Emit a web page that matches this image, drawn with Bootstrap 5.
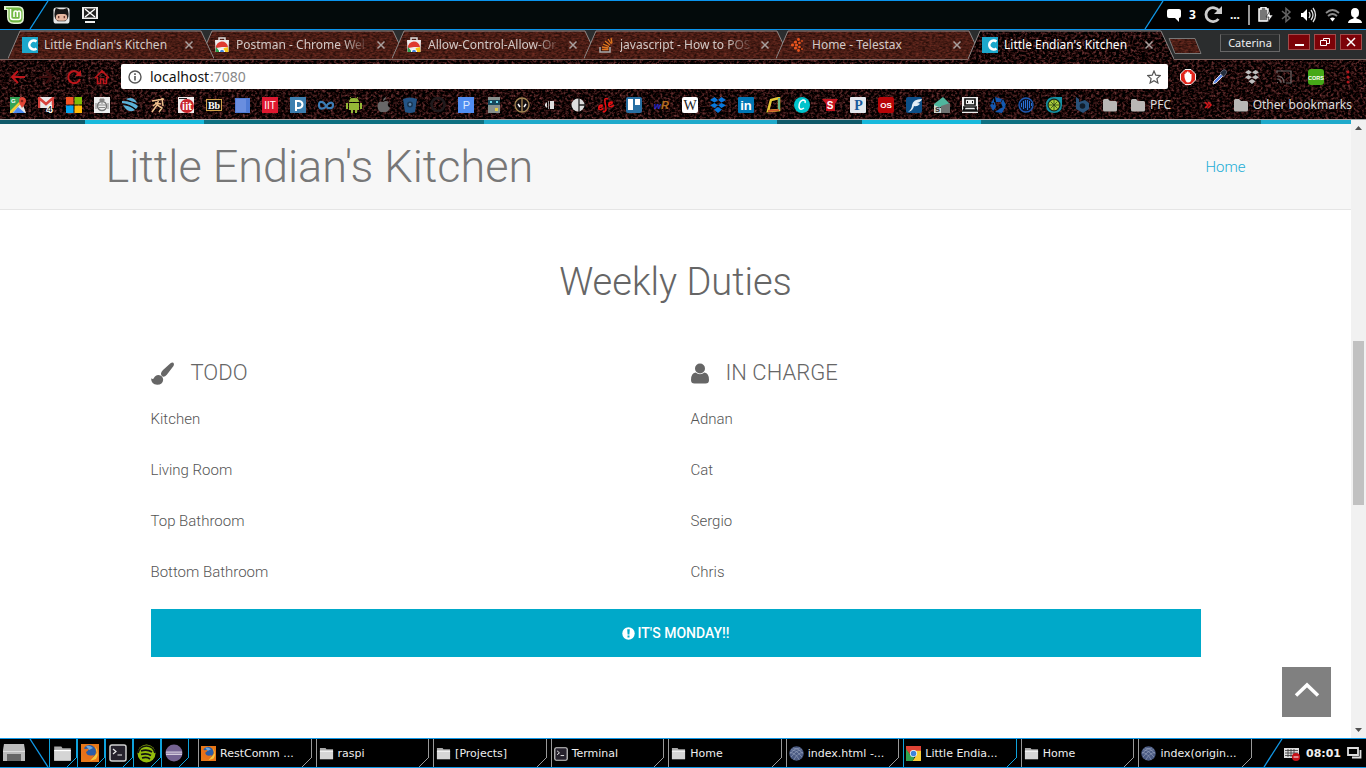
<!DOCTYPE html>
<html lang="en">
<head>
<meta charset="utf-8">
<meta name="viewport" content="width=device-width, initial-scale=1">
<title>Little Endian's Kitchen</title>
<link href="https://cdn.jsdelivr.net/npm/bootstrap@5.3.0/dist/css/bootstrap.min.css" rel="stylesheet">
<style>
:root { --line: #1199e8; --cyan: #00a9c9; --ui: "Noto Sans", "Open Sans", sans-serif; }
body { font-family: Roboto, sans-serif; background: #000; color: #666; }
button { border: 0; background: none; padding: 0; color: inherit; }
a { color: inherit; text-decoration: none; }
svg { display: block; flex: none; }

/* top panel */
.top-panel { height: 30px; background: #030a0b; border-top: 1px solid #0a94ee; border-bottom: 1px solid #0a94ee; font-family: var(--ui); color: #fff; }
.top-panel .tray { background: #000; gap: 8px; padding: 0 4px 0 2px; font-size: 12px; }

/* browser chrome */
.tab-strip { height: 30px; font-family: var(--ui); font-size: 12px; background: #2b2d2e; border-bottom: 1px solid #806a66; }
.browser-tab { width: 192px; height: 30px; color: #d3c9c6; }
.browser-tab .shape { position: absolute; left: 0; top: 0; }
.browser-tab .label { white-space: nowrap; }
.browser-tab .fades { -webkit-mask-image: linear-gradient(90deg, #000 80%, transparent); mask-image: linear-gradient(90deg, #000 80%, transparent); }
.browser-tab .inside { position: relative; height: 29px; padding: 0 6px 0 14px; gap: 6px; }
.user-name { height: 18px; width: 60px; border: 1px solid #666; border-top-color: #444; font-size: 11px; color: #eee; line-height: 16px; }
.win-btn { width: 22px; height: 16px; background: #7c0208; border: 1px solid #a14a4a; color: #fff; }
.textured { background-color: #0c0506; background-image: url("data:image/svg+xml,%3Csvg xmlns='http://www.w3.org/2000/svg' width='700' height='62'%3E%3Cfilter id='a' x='0' y='0' width='1' height='1' color-interpolation-filters='sRGB'%3E%3CfeTurbulence type='fractalNoise' baseFrequency='.35 .4' numOctaves='3' seed='8'/%3E%3CfeColorMatrix values='1 0 0 0 -.4 .55 0 0 0 -.25 .55 0 0 0 -.25 0 0 0 0 1'/%3E%3C/filter%3E%3Crect width='700' height='62' filter='url(%23a)'/%3E%3C/svg%3E"); }
.tool-row { height: 33px; padding: 0 10px; }
.nav-buttons { gap: 12px; width: 111px; }
.address { height: 25px; background: #fff; border-radius: 2px; color: #555; font-family: var(--ui); padding: 0 7px; }
.address input { border: 0; outline: 0; background: transparent; font-size: 14px; padding: 0; color: #111; min-width: 0; width: 60px; }
.address .port { color: #888; font-size: 14px; }
.bookmarks { height: 27px; padding: 0 14px 3px 10px; gap: 12px; font-family: var(--ui); font-size: 12px; color: #ddd; border-bottom: 1px solid #aaa; white-space: nowrap; overflow: hidden; }

/* web page */
.site { background: #fff; min-height: 0; }
.stripes { height: 4px; background: linear-gradient(90deg, #105a6a 0 85px, #18b9dc 85px 204px, #0f7182 204px 484px, #1faacb 484px 777px, #105a6a 777px 862px, #18b9dc 862px 981px, #0f7182 981px 1261px, #1faacb 1261px); }
.wide { max-width: 1170px; padding: 0 15px; }
.site-header { background: #f7f7f7; border-bottom: 1px solid #e5e5e5; height: 86px; }
.site-title { font-weight: 300; font-size: 45px; line-height: 50px; color: #777; }
.site-header .nav-link { font-weight: 300; font-size: 15px; color: #1badd6; padding: 2px 0 0; }
.duties { padding: 50px 45px 0; }
.duties h2 { font-weight: 300; font-size: 38px; line-height: 44px; color: #666; margin: 0 0 54px; }
.duties .row { --bs-gutter-x: 30px; }
.duties h3 { font-weight: 300; font-size: 22px; line-height: 30px; color: #666; gap: 17px; margin: 0 0 6px; }
.duty-list { font-weight: 300; font-size: 15px; line-height: 51px; margin: 0; color: #555; }
.notice { background: var(--cyan); color: #fff; font-weight: 500; font-size: 14px; height: 48px; gap: 3px; margin-top: 11px; }
.to-top { position: absolute; right: 20px; bottom: 21px; width: 49px; height: 50px; background: #808080; }
.scroll-track { width: 15px; background: #f1f1f1; }
.scroll-thumb { width: 11px; background: #c1c1c1; }

/* task bar */
.task-bar { height: 30px; border-top: 1px solid var(--line); border-bottom: 1px solid var(--line); background: #000; color: #eee; font: 11px/28px "DejaVu Sans", sans-serif; }
.launcher { width: 28px; height: 28px; border-left: 1px solid #0fa3dc; position: relative; padding-left: 3px; }
.tasks { gap: 4px; padding: 0 10px 0 9px; min-width: 0; }
.task { flex: 1 1 0; min-width: 0; white-space: nowrap; height: 28px; position: relative; padding: 1px 0 0 2px; gap: 4px; border-left: 1px solid #999; color: #eee; }
.corner::after { content: ""; position: absolute; right: 0; bottom: 0; width: 10px; height: 10px; background: linear-gradient(135deg, transparent 47%, currentColor 47% 54%, #000 54%); }
.corner::before { content: ""; position: absolute; right: 0; top: 0; bottom: 9px; border-right: 1px solid currentColor; }
.launcher.corner::before, .launcher.corner::after { color: #0fa3dc; }
.task.corner::before, .task.corner::after { color: #999; }
.task.current { border-color: #0fa3dc; }
.task.corner.current::before, .task.corner.current::after { color: #0fa3dc; }
.status { gap: 6px; padding-right: 4px; }
.clock { font-weight: 700; font-size: 11px; padding-top: 1px; }
</style>
</head>
<body class="vh-100 d-flex flex-column overflow-hidden">

<svg width="0" height="0" class="position-absolute" aria-hidden="true">
  <defs>
    <filter id="weave" x="0" y="0" width="1" height="1" color-interpolation-filters="sRGB">
      <feTurbulence type="fractalNoise" baseFrequency=".3 .6" numOctaves="2" seed="3"/>
      <feColorMatrix values=".45 0 0 0 .06  .2 0 0 0 .01  .16 0 0 0 0  0 0 0 0 1"/>
      <feComposite in2="SourceGraphic" operator="in"/>
    </filter>
    <filter id="scorch" x="0" y="0" width="1" height="1" color-interpolation-filters="sRGB">
      <feTurbulence type="fractalNoise" baseFrequency=".35 .4" numOctaves="3" seed="5"/>
      <feColorMatrix values="1 0 0 0 -.4  .55 0 0 0 -.25  .55 0 0 0 -.25  0 0 0 0 1"/>
      <feComposite in2="SourceGraphic" operator="in"/>
    </filter>
    <symbol id="tab-shape" viewBox="0 0 206 29"><path d="M0 29L12 1H193L206 29Z" fill="#4a2018" filter="url(#weave)"/><path d="M0 28.500L12 1H193L206 28.500" fill="none" stroke="#8b8685"/></symbol>
    <symbol id="tab-front" viewBox="0 0 206 30"><path d="M0 30L12 1H193L206 30Z" fill="#150809" filter="url(#scorch)"/><path d="M0 29L12 1H193L206 29" fill="none" stroke="#8b8685"/></symbol>
    <symbol id="close" viewBox="0 0 10 10"><path d="M1.500 1.500l7 7m0-7l-7 7" stroke="#aaa09e" stroke-width="1.500"/></symbol>
    <symbol id="fav-c" viewBox="0 0 16 16"><path fill="#1ca8cc" d="M0 0h16v16H0z"/><path d="M14.500 4.600A4.400 4.400 0 1 0 14.500 11.400" fill="none" stroke="#fff" stroke-width="2.600"/></symbol>
    <symbol id="store" viewBox="0 0 16 16"><path d="M5 3V1h6v2" fill="none" stroke="#ddd" stroke-width="1.500"/><path fill="#eee" d="M1 3h14l-.5 12h-13z"/><path fill="#df3b30" d="M2 11a6 6 0 0 1 12-1H8z"/><path fill="#2ba14b" d="M2 10l4 5H1.700z"/><path fill="#f7c71c" d="M14 10l.4 5H8l2-4z"/><path fill="#fff" d="M5 15a3 3 0 0 1 6 0z"/><path fill="#4285dd" d="M6 15a2 2.200 0 0 1 4 0z"/></symbol>
    <symbol id="folder" viewBox="0 0 16 16"><path fill="#b9b7b5" d="M1 3.500Q1 2 2.500 2H6l2 2h5.500Q15 4 15 5.500V13q0 1.500-1.500 1.500h-11Q1 14.500 1 13z"/></symbol>
    <symbol id="files" viewBox="0 0 16 16"><path fill="#aaa" d="M1 2h6l1 1.500h7V14H1z"/><path fill="#d5d5d5" d="M1 5h14v9H1z"/><path stroke="#fff" d="M1 5.500h14"/></symbol>
    <symbol id="firefox" viewBox="0 0 18 18"><path fill="#e77718" d="M0 0h18v18H0z"/><path fill="#f6c63b" d="M14 2q5 7 1 13l-6 2 7-8z"/><circle cx="8.500" cy="7.500" r="6.500" fill="#2a5da6"/><path fill="#6da9df" d="M5 2q4-1 7 2L8 6z"/><path fill="#e8711a" d="M1 3l3 2 4-.3Q7 7 5 8q1 5 8 3-2 5-7 4Q0 13 1 3z"/></symbol>
    <symbol id="shell" viewBox="0 0 18 18"><rect x="1" y="1" width="16" height="16" rx="2" fill="#25212c" stroke="#d0d0d0" stroke-width="1.500"/><path d="M4 5l3 2.500L4 10M8.500 11H13" fill="none" stroke="#eee" stroke-width="1.200"/></symbol>
    <symbol id="globe" viewBox="0 0 16 16"><circle cx="8" cy="8" r="7.700" fill="#4a5a82"/><path d="M2 4q6 0 12 8M1 7q6 0 10 8M4 2q6 0 11 6M14 4q-6 0-12 8M15 7q-6 0-10 8M12 2q-6 0-11 6" fill="none" stroke="#a3adc6" stroke-width=".6"/></symbol>
    <symbol id="chrome" viewBox="0 0 16 16"><path fill="#de4335" d="M0 0h16v6H8L4 9 0 4z"/><path fill="#31a350" d="M0 3l5 7 4 2-2 4H0z"/><path fill="#f8cc35" d="M10 5h6v11H7l4-6z"/><circle cx="8" cy="8" r="3.800" fill="#fff"/><circle cx="8" cy="8" r="3" fill="#3e83dc"/></symbol>
  </defs>
</svg>

<header class="top-panel d-flex flex-shrink-0 align-items-stretch">
  <div class="d-flex flex-grow-1 align-items-center">
    <svg width="49" height="28" viewBox="0 0 49 28"><path d="M0 0h48L30 28H0z"/><path d="M48 0L30 28" stroke="#1199e8" stroke-width="1.300"/><path d="M4 5h14q6 0 6 6v6q0 6-6 6h-4q-7 0-7-7V9H4z" fill="#dff0cf"/><path d="M6 6.500h12q4.500 0 4.500 5V17q0 4.500-5 4.500H14q-5.500 0-5.500-5.500V8H6z" fill="#72b843"/><path d="M10.500 8v8q0 2.500 2.500 2.500h5.500q2 0 2-2V12q0-2-1.500-2t-1.700 2v4m0-4q0-2-1.700-2T14 12v4" fill="none" stroke="#fff" stroke-width="1.600"/></svg>
    <button type="button" aria-label="GitHub" class="ms-1"><svg width="17" height="17" viewBox="0 0 18 18"><rect x=".5" y=".5" width="17" height="17" rx="3" fill="#e7e7e7"/><path fill="#171515" d="M2 4l1-3 4 1.500h4L15 1l1 3q2 8-3 11H5Q0 12 2 4z"/><rect x="3" y="7.500" width="12" height="7" rx="3.500" fill="#e8b7a0"/><path d="M6 9.500v2.500m6-2.500v2.500" stroke="#6b3b30" stroke-width="1.500"/></svg></button>
    <button type="button" aria-label="Display" class="ms-2 ps-1"><svg width="16" height="16" viewBox="0 0 16 16"><path fill="#eee" d="M0 0h16v12H0zM3 14h10v2H3z"/><path fill="#222" d="M2 1.500h12v9H2z"/><path d="M3 2l10 8M13 2L3 10" stroke="#fff" stroke-width="1.500"/></svg></button>
  </div>
  <svg width="22" height="28" viewBox="0 0 22 28"><path d="M20 0h2v28H2z"/><path d="M20 0L2 28" stroke="#1199e8" stroke-width="1.300"/></svg>
  <div class="tray d-flex align-items-center">
    <svg width="14" height="14" viewBox="0 0 14 14"><path fill="#fff" d="M2 1h10q2 0 2 2v5q0 2-2 2v4L8 10H2Q0 10 0 8V3q0-2 2-2z"/></svg>
    <b>3</b>
    <svg width="18" height="18" viewBox="0 0 18 18"><path d="M14.500 13A7 7 0 1 1 15 5" fill="none" stroke="#ccc" stroke-width="2.800"/><path fill="#ccc" d="M18 0v8h-8z"/></svg>
    <b>...</b>
    <svg width="2" height="20" viewBox="0 0 2 20"><path fill="#999" d="M0 0h2v20H0z"/></svg>
    <svg width="15" height="16" viewBox="0 0 15 16"><path d="M1 2h2V0h5v2h2v12H1z" fill="#777" stroke="#fff" stroke-width="1.500"/><path fill="#fff" stroke="#000" stroke-width=".6" d="M12 4l-4 6h3l-1 5 5-7h-3z"/></svg>
    <svg width="11" height="16" viewBox="0 0 11 16"><path d="M1 4l8 7-4 3.500v-13L9 5l-8 7" fill="none" stroke="#646464" stroke-width="1.500"/></svg>
    <svg width="17" height="16" viewBox="0 0 17 16"><path fill="#fff" d="M1 6h2l4-4v12l-4-4H1z"/><path d="M9 5q2 3 0 6m2-8q4 5 0 10m2-12q5 7 0 14" fill="none" stroke="#ddd" stroke-width="1.300"/></svg>
    <svg width="15" height="14" viewBox="0 0 15 14"><path d="M1 5q6.500-6 13 0M3 8q4.500-4 9 0" fill="none" stroke="#8a8a8a" stroke-width="1.800"/><path d="M5 10.500q2.500-2 5 0l-2.500 3z" fill="#fff"/></svg>
    <svg width="14" height="15" viewBox="0 0 14 15"><path fill="#fff" d="M7 0q4 0 4 4.500T8.500 9v1.500q5.500 1 5.500 4.500H0q0-3.500 5.500-4.500V9Q3 9 3 4.500T7 0z"/></svg>
  </div>
</header>

<nav class="tab-strip d-flex flex-shrink-0" aria-label="Browser tabs">
  <div class="d-flex ps-2 flex-grow-1 position-relative">
    <a href="#" class="browser-tab position-relative z-2"><svg class="shape" width="206" height="29"><use href="#tab-shape"/></svg><span class="inside d-flex align-items-center"><svg width="16" height="16"><use href="#fav-c"/></svg><span class="label flex-grow-1">Little Endian's Kitchen</span><svg width="10" height="10"><use href="#close"/></svg></span></a>
    <a href="#" class="browser-tab position-relative z-1"><svg class="shape" width="206" height="29"><use href="#tab-shape"/></svg><span class="inside d-flex align-items-center"><svg width="16" height="16"><use href="#store"/></svg><span class="label fades flex-grow-1">Postman - Chrome Wel</span><svg width="10" height="10"><use href="#close"/></svg></span></a>
    <a href="#" class="browser-tab position-relative z-1"><svg class="shape" width="206" height="29"><use href="#tab-shape"/></svg><span class="inside d-flex align-items-center"><svg width="16" height="16"><use href="#store"/></svg><span class="label fades flex-grow-1">Allow-Control-Allow-Or</span><svg width="10" height="10"><use href="#close"/></svg></span></a>
    <a href="#" class="browser-tab position-relative z-1"><svg class="shape" width="206" height="29"><use href="#tab-shape"/></svg><span class="inside d-flex align-items-center"><svg width="16" height="16" viewBox="0 0 16 16"><path d="M2 10v5h10v-5" fill="none" stroke="#aaa" stroke-width="1.500"/><path d="M4 12.500h6.500M4 10l6.500 1M5 7l6 2.600M7 4l5 4M10 2l3.500 5M13 1l1 5" stroke="#e0761e" stroke-width="1.300"/></svg><span class="label fades flex-grow-1">javascript - How to POS</span><svg width="10" height="10"><use href="#close"/></svg></span></a>
    <a href="#" class="browser-tab position-relative z-1"><svg class="shape" width="206" height="29"><use href="#tab-shape"/></svg><span class="inside d-flex align-items-center"><svg width="16" height="16" viewBox="0 0 16 16" fill="#e8541d"><circle cx="2.500" cy="8" r="1.600"/><circle cx="5.500" cy="5" r="1.600"/><circle cx="5.500" cy="11" r="1.600"/><circle cx="6.500" cy="8" r="1.600"/><circle cx="8.500" cy="2.500" r="1.400"/><circle cx="8.500" cy="13.500" r="1.400"/><circle cx="9.500" cy="6" r="1.300"/><circle cx="9.500" cy="10" r="1.300"/><circle cx="12" cy="4" r=".9"/><circle cx="12" cy="12" r=".9"/></svg><span class="label flex-grow-1">Home - Telestax</span><svg width="10" height="10"><use href="#close"/></svg></span></a>
    <a href="#" class="browser-tab position-relative z-3 text-white" aria-current="page"><svg class="shape" width="206" height="30"><use href="#tab-front"/></svg><span class="inside d-flex align-items-center"><svg width="16" height="16"><use href="#fav-c"/></svg><span class="label flex-grow-1">Little Endian's Kitchen</span><svg width="10" height="10"><use href="#close"/></svg></span></a>
    <button type="button" aria-label="New tab" class="ms-1 align-self-start pt-2"><svg width="34" height="16" viewBox="0 0 34 16" class="ms-1"><path d="M1 0h26l6 15H7z" fill="#4a2018" filter="url(#weave)"/><path d="M1 .5h26l6 15H7z" fill="none" stroke="#777"/></svg></button>
  </div>
  <div class="d-flex align-items-start gap-1 pt-1 pe-1">
    <button type="button" class="user-name me-1">Caterina</button>
    <button type="button" class="win-btn" aria-label="Minimize"><svg width="20" height="14" viewBox="0 0 20 14"><path fill="#fff" d="M6 9h9v2H6z"/></svg></button>
    <button type="button" class="win-btn" aria-label="Restore"><svg width="20" height="14" viewBox="0 0 20 14"><path d="M8.500 5V3.500h6v5H12M5.500 5.500h6v5h-6z" fill="none" stroke="#fff"/></svg></button>
    <button type="button" class="win-btn" aria-label="Close"><svg width="20" height="14" viewBox="0 0 20 14"><path d="M6 3l8 8m0-8l-8 8" stroke="#fff" stroke-width="1.500"/></svg></button>
  </div>
</nav>

<div class="textured flex-shrink-0">
  <div class="tool-row d-flex align-items-center">
    <div class="nav-buttons d-flex">
      <button type="button" aria-label="Back"><svg width="16" height="16" viewBox="0 0 16 16"><path d="M15 8H2m6-6L2 8l6 6" fill="none" stroke="#c0161b" stroke-width="2"/></svg></button>
      <button type="button" aria-label="Forward"><svg width="16" height="16" viewBox="0 0 16 16"><path d="M1 8h13M8 2l6 6-6 6" fill="none" stroke="#3d0d0e" stroke-width="2"/></svg></button>
      <button type="button" aria-label="Reload"><svg width="16" height="16" viewBox="0 0 16 16"><path d="M14 10A6 6 0 1 1 12 3.500L14 6" fill="none" stroke="#c0161b" stroke-width="2"/><path fill="#c0161b" d="M15 1v6H9z"/></svg></button>
      <button type="button" aria-label="Home page"><svg width="16" height="16" viewBox="0 0 16 16"><path d="M1 9l7-7 7 7M3.500 8v6.500h3V10h3v4.500h3V8" fill="none" stroke="#c0161b" stroke-width="1.600"/></svg></button>
    </div>
    <div class="address d-flex align-items-center flex-grow-1">
      <svg width="14" height="14" viewBox="0 0 14 14" class="me-2"><circle cx="7" cy="7" r="6" fill="none" stroke="#555" stroke-width="1.400"/><path d="M7 6v4.500M7 3.300v1.600" stroke="#555" stroke-width="1.600"/></svg>
      <input type="text" aria-label="Address" value="localhost"><span class="port">:7080</span>
      <svg width="14" height="14" viewBox="0 0 14 14" class="ms-auto"><path d="M7 1l1.800 4.200 4.500.4-3.400 3 1 4.400L7 10.700 3.100 13l1-4.400-3.400-3 4.500-.4z" fill="none" stroke="#555" stroke-width="1.200"/></svg>
    </div>
    <div class="d-flex align-items-center gap-3 ms-2 ps-1">
      <button type="button" aria-label="Ad blocker"><svg width="16" height="16" viewBox="0 0 16 16"><path d="M5 .5h6L15.500 5v6L11 15.500H5L.5 11V5z" fill="#e2231a" stroke="#eee"/><path fill="#fff" d="M4.500 8V5h1V3.500H7V2.500h1.500v1H10V5h1.500v4q0 4.500-3.500 4.500-2.500 0-3.500-5.500z"/></svg></button>
      <button type="button" aria-label="Colour picker"><svg width="16" height="16" viewBox="0 0 16 16"><path d="M1 15l1-3 7-7 2 2-7 7z" fill="#5581e8" stroke="#ddd"/><path fill="#222d3c" stroke="#778" stroke-width=".7" d="M8 4l3-3q4-1 3.500 3l-3 4z"/></svg></button>
      <button type="button" aria-label="Dropbox"><svg width="16" height="16" viewBox="0 0 16 16" fill="#bebebe"><path d="M4.500 1L8 3.300 4.500 5.600 1 3.300zm7 0L15 3.300l-3.500 2.300L8 3.300zM4.500 6L8 8.300l-3.500 2.300L1 8.300zm7 0L15 8.300l-3.500 2.300L8 8.300zM8 10l3.500 2.300L8 15l-3.500-2.700z"/></svg></button>
      <button type="button" aria-label="Cast"><svg width="16" height="16" viewBox="0 0 16 16"><path d="M1 4V2h14v12h-5M1 7q7 0 7 7M1 10q4 0 4 4M1 13.500h1" fill="none" stroke="#6e6868" stroke-width="1.200"/></svg></button>
      <button type="button" aria-label="CORS"><svg width="16" height="16" viewBox="0 0 16 16"><rect width="16" height="16" rx="3" fill="#46a818"/><text x="8" y="10.500" text-anchor="middle" font-family="Liberation Sans, sans-serif" font-weight="700" font-size="5.500" fill="#fff">CORS</text></svg></button>
      <button type="button" aria-label="Menu"><svg width="16" height="16" viewBox="0 0 16 16" fill="#b5151a"><circle cx="8" cy="3" r="1.500"/><circle cx="8" cy="8" r="1.500"/><circle cx="8" cy="13" r="1.500"/></svg></button>
    </div>
  </div>
  <nav class="bookmarks d-flex align-items-center" aria-label="Bookmarks">
    <a href="#" aria-label="Maps"><svg width="16" height="16" viewBox="0 0 16 16"><path fill="#34a355" d="M0 0h10v8l-8 8H0z"/><path fill="#e8e8e8" d="M2 16L12 5l4 11z"/><path fill="#4b8bf0" d="M3 16l5-6 7 6z"/><path fill="#f6ca34" d="M0 14L10 4l1 2L2 16H0z"/><path fill="#e24536" d="M12 0q4 0 4 4 0 2-4 7-3-5-3-7 0-4 3-4z"/><circle cx="12" cy="4" r="1.300" fill="#83221b"/><text x="1" y="6" font-family="Liberation Sans, sans-serif" font-size="6" font-weight="700" fill="#fff">G</text></svg></a>
    <a href="#" aria-label="Mail"><svg width="16" height="16" viewBox="0 0 16 16"><path fill="#e9e9e9" d="M0 0h16v11H0z"/><path fill="none" stroke="#d8423c" stroke-width="2.500" d="M1 11V1l7 6 7-6v10"/><text x="9" y="15" font-family="Liberation Sans, sans-serif" font-size="9" stroke="#fff" stroke-width="2" paint-order="stroke" fill="#000">4</text></svg></a>
    <a href="#" aria-label="Microsoft"><svg width="16" height="16" viewBox="0 0 16 16"><path fill="#f35325" d="M0 0h7.500v7.500H0z"/><path fill="#81bc06" d="M8.500 0H16v7.500H8.500z"/><path fill="#05a6f0" d="M0 8.500h7.500V16H0z"/><path fill="#ffba08" d="M8.500 8.500H16V16H8.500z"/></svg></a>
    <a href="#" aria-label="University"><svg width="16" height="16" viewBox="0 0 16 16"><path fill="#eee" d="M0 0h16v16H0z"/><circle cx="8" cy="9" r="4.500" fill="none" stroke="#777" stroke-width="1.500"/><path d="M6 2h4v2H6zM4 8h8M5 10.500h6M8 4v3M2 6v6m12-6v6" stroke="#888" fill="#888"/></svg></a>
    <a href="#" aria-label="Sphere"><svg width="16" height="16" viewBox="0 0 16 16"><path d="M4 2q8-3 11 4l-9-3zM0 4q10 0 16 5-1 2-2 3Q8 7 0 6zM1 8q8 1 12 5-7 4-12-5z" fill="#5bb1d8"/></svg></a>
    <a href="#" aria-label="Archer"><svg width="16" height="16" viewBox="0 0 16 16"><path d="M2 4l12-2M9 2L7 8l5 3-3 4M7 8L2 15M8 5L3 9M12 1l1 8M5 6l6 1" fill="none" stroke="#f1c18d" stroke-width="1.500"/></svg></a>
    <a href="#" aria-label="Blog"><svg width="16" height="16" viewBox="0 0 16 16"><path fill="#eee" d="M0 0h16v16H0z"/><circle cx="9" cy="9" r="7" fill="#c9242b"/><text x="9" y="13" text-anchor="middle" font-family="Liberation Sans, sans-serif" font-size="11" font-weight="700" fill="#fff">iit</text><path d="M1 1.500h8" stroke="#222"/></svg></a>
    <a href="#" aria-label="Blackboard"><svg width="16" height="16" viewBox="0 0 16 16"><rect x=".5" y="2.500" width="15" height="11" fill="#111" stroke="#d2a44a"/><text x="8" y="11.500" text-anchor="middle" font-family="Liberation Serif, serif" font-size="10" font-weight="700" fill="#fff">Bb</text></svg></a>
    <a href="#" aria-label="Blue"><svg width="16" height="16" viewBox="0 0 16 16"><path fill="#507bd5" d="M1 1h15v15H1z"/><path fill="#6a8edf" d="M2 2h10v13H2z"/></svg></a>
    <a href="#" aria-label="IIT"><svg width="16" height="16" viewBox="0 0 16 16"><path fill="#df1830" d="M0 0h16v16H0z"/><text x="8" y="12" text-anchor="middle" font-family="Liberation Sans, sans-serif" font-size="10" fill="#fff">IIT</text></svg></a>
    <a href="#" aria-label="Pandora"><svg width="16" height="16" viewBox="0 0 16 16"><path fill="#3d7fb0" d="M0 0h16v16H0z"/><path d="M6 14V4h3q3.500.5 3.500 3.500T9 11H7" fill="none" stroke="#fff" stroke-width="2"/></svg></a>
    <a href="#" aria-label="Coursera"><svg width="16" height="16" viewBox="0 0 16 16"><path d="M6 6Q1 3 1 8t5 3q2-1 4-4 5-3 5 1t-5 3Q8 9 6 6z" fill="none" stroke="#3c7cb6" stroke-width="2.200"/></svg></a>
    <a href="#" aria-label="Android"><svg width="16" height="16" viewBox="0 0 16 16"><path fill="#95b837" d="M3 5q0-4 5-4t5 4zM3 6h10v7H3zM0 6h2v6H0zm14 0h2v6h-2zM5 12h2v4H5zm4 0h2v4H9z"/><path d="M4 0l1.500 2M12 0l-1.500 2" stroke="#95b837"/></svg></a>
    <a href="#" aria-label="Apple"><svg width="16" height="16" viewBox="0 0 16 16"><path fill="#686768" d="M9 5q3-2 6 0-3 3 1 6-2 4-4 4H9Q4 16 3.500 9 4 3 9 5zM9 4q0-3 3-4 0 3-3 4z"/></svg></a>
    <a href="#" aria-label="Bitbucket"><svg width="16" height="16" viewBox="0 0 16 16"><path fill="#235486" d="M1 2q7-3 14 0l-2 13q-5 2-10 0z"/><circle cx="8" cy="7.500" r="3" fill="#183654"/><circle cx="8" cy="7.500" r="1.400" fill="#5d8ab4"/></svg></a>
    <a href="#" aria-label="GitHub"><svg width="16" height="16" viewBox="0 0 16 16"><circle cx="8" cy="7.500" r="6.500" fill="none" stroke="#211b1d" stroke-width="2.500"/></svg></a>
    <a href="#" aria-label="Portal"><svg width="16" height="16" viewBox="0 0 16 16"><path fill="#508df1" d="M0 0h16v16H0z"/><text x="8.500" y="12" text-anchor="middle" font-family="Liberation Sans, sans-serif" font-size="11" fill="#ddeaff">P</text></svg></a>
    <a href="#" aria-label="Robot"><svg width="16" height="16" viewBox="0 0 16 16"><path fill="#87918d" d="M2 0h12v16H2z"/><path fill="#17485b" d="M2 3h12v5H2z"/><path fill="#6bdced" d="M4 4h2v2H4zm6 0h2v2h-2z"/><path fill="#e1cd45" d="M9 11h3v3H9z"/></svg></a>
    <a href="#" aria-label="Mask"><svg width="16" height="16" viewBox="0 0 16 16"><circle cx="8" cy="8" r="7" fill="#141012" stroke="#a38554" stroke-width="1.400"/><path d="M8 1v14" stroke="#a38554" stroke-width="1.400"/><path d="M4 7l2 3m6-3l-2 3" stroke="#fff" stroke-width="1.500"/></svg></a>
    <a href="#" aria-label="Projector"><svg width="16" height="16" viewBox="0 0 16 16"><path fill="#ddd" d="M8 4h4v8H8zM3 7l2-2v6L3 9z"/><path fill="#999" d="M6 4h1v8H6z"/></svg></a>
    <a href="#" aria-label="Chart"><svg width="16" height="16" viewBox="0 0 16 16"><circle cx="8" cy="8" r="6.500" fill="#ddd"/><path d="M9 1v14M9 8h7" stroke="#222" stroke-width="1.300"/></svg></a>
    <a href="#" aria-label="eSe"><svg width="16" height="16" viewBox="0 0 16 16"><path d="M0 11q5-1 4-3-4 0-3 4 2 2 4-1M10 2Q6 0 7 5t1 8q-2 3-3 1M10 8q5-1 4-3-4 0-3 4 2 2 5-1" fill="none" stroke="#e80e12" stroke-width="1.500"/></svg></a>
    <a href="#" aria-label="Trello"><svg width="16" height="16" viewBox="0 0 16 16"><rect width="16" height="16" rx="2" fill="#286fa3"/><path fill="#fff" d="M2 2h5v11H2zm7 0h5v6H9z"/></svg></a>
    <a href="#" aria-label="WordReference"><svg width="16" height="16" viewBox="0 0 16 16"><text x="0" y="12" font-family="Liberation Sans, sans-serif" font-style="italic" font-weight="700" font-size="9" fill="#2828d0">w<tspan fill="#b46c20" font-size="11">R</tspan></text></svg></a>
    <a href="#" aria-label="Wikipedia"><svg width="16" height="16" viewBox="0 0 16 16"><rect width="16" height="16" rx="2" fill="#fff"/><text x="8" y="12.500" text-anchor="middle" font-family="Liberation Serif, serif" font-size="14" fill="#222">W</text></svg></a>
    <a href="#" aria-label="Dropbox"><svg width="16" height="16" viewBox="0 0 16 16" fill="#0878dc"><path d="M4.500 0L8 3 4.500 5.600 0 3zm7 0L16 3l-4.500 2.600L8 3zM4.500 6L8 8.300 4.500 11 0 8.300zm7 0L16 8.300 11.500 11 8 8.300zM8 10l4 2.600L8 16l-4-3.400z"/></svg></a>
    <a href="#" aria-label="LinkedIn"><svg width="16" height="16" viewBox="0 0 16 16"><rect width="16" height="16" rx="1" fill="#0077b5"/><text x="8" y="13" text-anchor="middle" font-family="Liberation Sans, sans-serif" font-weight="700" font-size="13" fill="#fff">in</text></svg></a>
    <a href="#" aria-label="Frame"><svg width="16" height="16" viewBox="0 0 16 16"><path d="M2 14L5 3l8-2v12z" fill="none" stroke="#e6c936" stroke-width="2.500"/><path d="M13 1v12" stroke="#6bb987" stroke-width="2"/><path d="M2 14l11-1" stroke="#cb552c" stroke-width="2"/></svg></a>
    <a href="#" aria-label="Canva"><svg width="16" height="16" viewBox="0 0 16 16"><circle cx="8" cy="8" r="8" fill="#00c4cc"/><path d="M11 6q1-3-2-3-4 1-4 7 1 4 5 1" fill="none" stroke="#fff" stroke-width="1.500"/></svg></a>
    <a href="#" aria-label="S"><svg width="16" height="16" viewBox="0 0 16 16"><path fill="#c61620" d="M0 2h16l-3 5v7H4V7z"/><text x="8" y="12" text-anchor="middle" font-family="Liberation Sans, sans-serif" font-weight="700" font-size="10" fill="#fff">S</text></svg></a>
    <a href="#" aria-label="Pandora"><svg width="16" height="16" viewBox="0 0 16 16"><rect width="16" height="16" rx="1" fill="#e3e7ec"/><text x="8.500" y="13" text-anchor="middle" font-family="Liberation Serif, serif" font-weight="700" font-size="14" fill="#19599b">P</text></svg></a>
    <a href="#" aria-label="OS"><svg width="16" height="16" viewBox="0 0 16 16"><rect width="16" height="16" rx="2" fill="#b80508"/><text x="8" y="11" text-anchor="middle" font-family="Liberation Sans, sans-serif" font-weight="700" font-size="8" fill="#fff">OS</text></svg></a>
    <a href="#" aria-label="Feather"><svg width="16" height="16" viewBox="0 0 16 16"><rect width="16" height="16" rx="2" fill="#0c4f88"/><path d="M2 15q4-3 4-7 1-6 10-6-1 3-5 4 3 0 3 1-3 3-6 2-1 5-6 6z" fill="#e2edf5"/></svg></a>
    <a href="#" aria-label="House"><svg width="16" height="16" viewBox="0 0 16 16"><path fill="#4fb69d" d="M0 7l9-7 7 7v3H0z"/><path fill="#6d7270" d="M7 9l9-3v10H7z"/><path fill="#ccd5d0" d="M0 8l7 3v5H0z"/><text x="1" y="15" font-family="Liberation Sans, sans-serif" font-weight="700" font-size="9" fill="#333">s</text></svg></a>
    <a href="#" aria-label="Typewriter"><svg width="16" height="16" viewBox="0 0 16 16"><path fill="#eee" d="M0 0h16v16H0z"/><path d="M3 2h10v6H3zM1 13h14M3 10h10l2 4H1zM1 10h2m10 0h2" fill="none" stroke="#111" stroke-width="1.700"/><path d="M5 5h1m4 0h1" stroke="#111" stroke-width="2"/></svg></a>
    <a href="#" aria-label="Shutter"><svg width="16" height="16" viewBox="0 0 16 16"><path fill="#1458b0" d="M5 0l7 2-1 3H6zM13 2l3 6-3 3-2-5zM16 9l-4 7-7-1 6-4zM5 5l-5 3 3 6 3-4zM4 8L1 6l3-5z"/></svg></a>
    <a href="#" aria-label="Radio"><svg width="16" height="16" viewBox="0 0 16 16"><circle cx="8" cy="8" r="7" fill="#0b142b" stroke="#1d5ab5" stroke-width="1.300"/><path d="M3.500 6v4m2-6v8m2-9v8m2-8v10m2-9v7m2-5v3" stroke="#2e7ae8" stroke-width=".9"/></svg></a>
    <a href="#" aria-label="Lime"><svg width="16" height="16" viewBox="0 0 16 16"><path fill="#1492a6" d="M8 0h8v8q0 8-8 8T0 8q0-8 8-8z"/><circle cx="8" cy="8" r="6.500" fill="#1a2b18"/><circle cx="8" cy="8" r="5.300" fill="#accf39"/><path d="M8 3v10M3 8h10M4.500 4.500l7 7m0-7l-7 7" stroke="#294018" stroke-width=".8"/></svg></a>
    <a href="#" aria-label="Hexagon"><svg width="16" height="16" viewBox="0 0 16 16"><path fill="#2a527a" d="M2 0l3 2v3l6-2 4 3v6l-6 4-7-4z"/><circle cx="8.500" cy="9" r="2.800" fill="#101c2a"/></svg></a>
    <a href="#" aria-label="Folder"><svg width="16" height="16"><use href="#folder"/></svg></a>
    <a href="#" class="d-flex align-items-center gap-1"><svg width="16" height="16"><use href="#folder"/></svg>PFC</a>
    <button type="button" class="ms-auto me-2" aria-label="More bookmarks"><svg width="9" height="10" viewBox="0 0 9 10"><path d="M1 2l3 3-3 3m3-6l3 3-3 3" fill="none" stroke="#d8161b" stroke-width="1.600"/></svg></button>
    <a href="#" class="d-flex align-items-center gap-1"><svg width="16" height="16"><use href="#folder"/></svg>Other bookmarks</a>
  </nav>
</div>

<div class="site d-flex flex-grow-1">
  <div class="flex-grow-1 position-relative overflow-hidden">
    <div class="stripes"></div>
    <header class="site-header d-flex align-items-center">
      <div class="container wide d-flex align-items-center justify-content-between">
        <h1 class="site-title m-0">Little Endian's Kitchen</h1>
        <nav class="nav"><a class="nav-link" href="#">Home</a></nav>
      </div>
    </header>
    <main class="container wide">
      <section class="duties">
        <h2 class="text-center">Weekly Duties</h2>
        <div class="row">
          <div class="col-6">
            <h3 class="d-flex align-items-center"><svg width="23" height="23" viewBox="0 0 23 23" fill="#666"><path d="M22.300.7Q21 0 19.500 1.300L12 8q-2.300 2.300-2 4.200.3 1.800 2 2.600 2 .2 3.800-2L22.500 4q1-2.300-.2-3.300z"/><path d="M.2 16.300q1 1.200 2.500.2Q4 13 7.500 13q4.500.7 4.700 4.700-.5 4.900-6 5Q-.2 22.300.2 16.300z"/></svg>TODO</h3>
            <ul class="duty-list list-unstyled"><li>Kitchen</li><li>Living Room</li><li>Top Bathroom</li><li>Bottom Bathroom</li></ul>
          </div>
          <div class="col-6">
            <h3 class="d-flex align-items-center"><svg width="18" height="21" viewBox="0 0 18 21" fill="#666"><circle cx="9" cy="5.500" r="5"/><path d="M4.500 9.500q4.500 3.500 9 0Q18 10 18 17q0 3.500-3.500 3.500h-11Q0 20.500 0 17q0-7 4.500-7.500z"/></svg>IN CHARGE</h3>
            <ul class="duty-list list-unstyled"><li>Adnan</li><li>Cat</li><li>Sergio</li><li>Chris</li></ul>
          </div>
        </div>
        <button type="button" class="notice w-100 d-flex align-items-center justify-content-center"><svg width="13" height="13" viewBox="0 0 13 13"><circle cx="6.500" cy="6.500" r="6.200" fill="#fff"/><path d="M5.200 2.300h2.600L7.400 7.500H5.600zM5.500 8.600h2v2h-2z" fill="#00a9c9"/></svg>IT'S MONDAY!!</button>
      </section>
    </main>
    <button type="button" class="to-top d-flex align-items-center justify-content-center" aria-label="Back to top"><svg width="26" height="20" viewBox="0 0 26 20"><path d="M2 13.500L13 3l11 10.500" fill="none" stroke="#fff" stroke-width="3.500"/></svg></button>
  </div>
  <div class="scroll-track d-flex flex-column align-items-center" aria-hidden="true">
    <svg width="15" height="15" viewBox="0 0 15 15"><path fill="#505050" d="M7.500 6L11 10H4z"/></svg>
    <div style="flex:206 0 0"></div><div class="scroll-thumb" style="flex:164 0 0"></div><div style="flex:218 0 0"></div>
    <svg width="15" height="15" viewBox="0 0 15 15"><path fill="#505050" d="M4 5h7L7.500 9z"/></svg>
  </div>
</div>

<footer class="task-bar d-flex flex-shrink-0">
  <button type="button" aria-label="Show desktop"><svg width="49" height="28" viewBox="0 0 49 28"><path d="M30 0L48 28" stroke="#1199e8" stroke-width="1.300"/><path fill="#bbb" d="M4 5h20l1 6v11H3V11z"/><path fill="#666" d="M7 15h14v7H7z"/><path stroke="#ddd" d="M3 12.500h22"/></svg></button>
  <div class="d-flex">
    <button type="button" class="launcher corner" aria-label="Files"><svg width="19" height="19"><use href="#files"/></svg></button>
    <button type="button" class="launcher corner" aria-label="Firefox"><svg width="18" height="18"><use href="#firefox"/></svg></button>
    <button type="button" class="launcher corner" aria-label="Terminal"><svg width="18" height="18"><use href="#shell"/></svg></button>
    <button type="button" class="launcher corner" aria-label="Spotify"><svg width="19" height="19" viewBox="0 0 19 19"><circle cx="9.500" cy="9.500" r="9" fill="#94bd0c"/><path d="M1 9Q3 2 9.500 2T18 9M4 7q6-2 11 1M4 10.500q6-1.500 10 1M5 14q5-1.500 8 1" fill="none" stroke="#111" stroke-width="1.700"/></svg></button>
    <button type="button" class="launcher corner" aria-label="Eclipse"><svg width="18" height="18" viewBox="0 0 18 18"><circle cx="9" cy="9" r="8.500" fill="#746292"/><path d="M1 7.500h16v3.500H1z" fill="#d3cadc"/><path d="M1 9.200h16" stroke="#84739e"/></svg></button>
  </div>
  <div class="tasks d-flex flex-grow-1">
    <button type="button" class="task corner d-flex align-items-center"><svg width="15" height="15"><use href="#firefox"/></svg>RestComm ...</button>
    <button type="button" class="task corner d-flex align-items-center"><svg width="15" height="15"><use href="#files"/></svg>raspi</button>
    <button type="button" class="task corner d-flex align-items-center"><svg width="15" height="15"><use href="#files"/></svg>[Projects]</button>
    <button type="button" class="task corner d-flex align-items-center"><svg width="14" height="14"><use href="#shell"/></svg>Terminal</button>
    <button type="button" class="task corner d-flex align-items-center"><svg width="15" height="15"><use href="#files"/></svg>Home</button>
    <button type="button" class="task corner d-flex align-items-center"><svg width="15" height="15"><use href="#globe"/></svg>index.html -...</button>
    <button type="button" class="task corner current d-flex align-items-center"><svg width="15" height="15"><use href="#chrome"/></svg>Little Endia...</button>
    <button type="button" class="task corner d-flex align-items-center"><svg width="15" height="15"><use href="#files"/></svg>Home</button>
    <button type="button" class="task corner d-flex align-items-center"><svg width="15" height="15"><use href="#globe"/></svg>index(origin...</button>
  </div>
  <svg width="22" height="28" viewBox="0 0 22 28"><path d="M20 0L2 28" stroke="#1199e8" stroke-width="1.300"/></svg>
  <div class="status d-flex align-items-center">
    <svg width="16" height="15" viewBox="0 0 16 15"><path fill="#ddd" d="M0 2h15v10H0z"/><path d="M1 4.500h13M1 7h13M1 9.500h13M4 3v8M7 3v8M10 3v8" stroke="#333" stroke-width=".8"/><circle cx="12" cy="11" r="4" fill="#c41218"/><path d="M9.500 11h5" stroke="#fff"/></svg>
    <span class="clock">08:01</span>
    <svg width="15" height="14" viewBox="0 0 15 14"><path d="M1 2h10v7H1zM13.500 4v7.500H5" fill="none" stroke="#ddd" stroke-width="1.800"/></svg>
  </div>
</footer>
<script src="https://cdn.jsdelivr.net/npm/bootstrap@5.3.0/dist/js/bootstrap.bundle.min.js"></script>
</body>
</html>
